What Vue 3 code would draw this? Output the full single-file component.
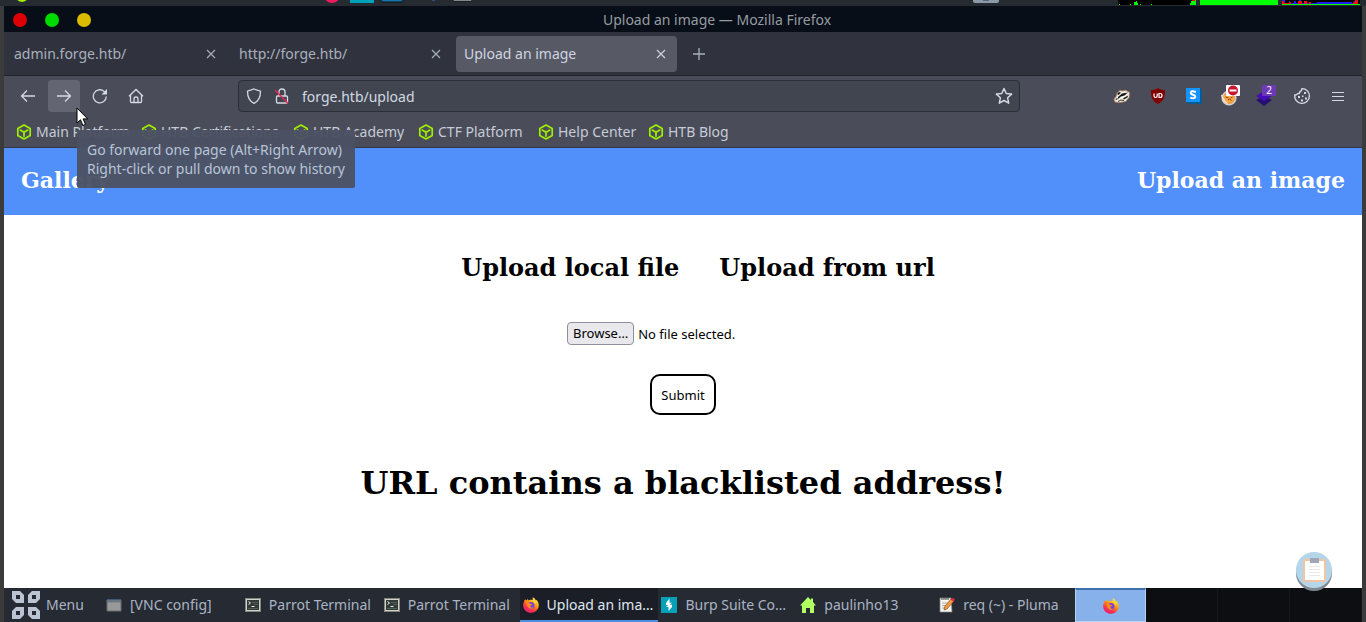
<script setup>
const tabs = [
  { title: 'admin.forge.htb/', active: false },
  { title: 'http://forge.htb/', active: false },
  { title: 'Upload an image', active: true },
]
const bookmarks = ['Main Platform', 'HTB Certifications', 'HTB Academy', 'CTF Platform', 'Help Center', 'HTB Blog']
const tasks = [
  { title: '[VNC config]', icon: 'window' },
  { title: 'Parrot Terminal', icon: 'terminal' },
  { title: 'Parrot Terminal', icon: 'terminal' },
  { title: 'Upload an ima…', icon: 'firefox', active: true },
  { title: 'Burp Suite Co…', icon: 'burp' },
  { title: 'paulinho13', icon: 'home' },
  { title: 'req (~) - Pluma', icon: 'pluma' },
]
</script>

<template>
  <div class="desktop">
    <svg class="defs" width="0" height="0" aria-hidden="true">
      <defs>
        <linearGradient id="flame" x1="0.8" y1="0" x2="0.2" y2="1">
          <stop offset="0" stop-color="#fff44f" />
          <stop offset="0.4" stop-color="#ff980e" />
          <stop offset="0.7" stop-color="#ff3647" />
          <stop offset="1" stop-color="#e31587" />
        </linearGradient>
        <symbol id="fox" viewBox="0 0 16 16">
          <path d="M1 5c.2-1.500.8-2.300 1.400-2.800L3 3.500 5 2l.3 1.500c1.500-.8 3-.8 4.200-.2L9.800.2c2 1 2.700 2.200 3 3.300l.9-.4c2 2.400 2.600 5 1.500 8-1.200 3-4 4.700-7.200 4.700C3.500 15.800.2 12.500.2 8.500.2 7 .5 6 1 5z" fill="url(#flame)" />
          <circle cx="8" cy="8.600" r="3.500" fill="#7542e5" />
          <path d="M3.500 6.500c1.500-.8 3-.5 4.200.4l2 .1c-.5 1-1.700 1.200-2.200 2-.2 1.300 1.200 2.200 3 1.200-1.500 2.800-6.300 2.200-7-3.700z" fill="#ff8a16" />
          <path d="M8.500 3.800c2 .3 3.500 1.800 3.700 3.700l1.300-2.500-2-2.500z" fill="#ffd43a" />
        </symbol>
        <symbol id="cube" viewBox="0 0 16 16">
          <path d="M8 1.100 14.200 4.600v6.900L8 15 1.800 11.500V4.600zM4.200 6.100 8 8.300l3.800-2.200M8 8.300v3.900" fill="none" stroke="#9fef00" stroke-width="1.700" stroke-linejoin="round" stroke-linecap="round" />
        </symbol>
      </defs>
    </svg>

    <div class="strip" aria-hidden="true">
      <svg width="480" height="6">
        <circle cx="22" cy="-4" r="6" fill="#9fef00" />
        <circle cx="332" cy="-5" r="8" fill="#ef1a5e" />
        <rect x="350" width="24" height="3" fill="#00a0b8" />
        <rect x="381" y="-4" width="22" height="6" rx="2" fill="#1476a8" stroke="#0b1118" />
        <rect x="432" width="3" height="1" fill="#35507c" />
        <rect x="453" y="-4" width="19" height="5" rx="1" fill="#fff" stroke="#0b1118" />
      </svg>
      <svg width="406" height="6">
        <rect x="13" y="-4" width="26" height="7" rx="2" fill="#8a9aa8" />
        <rect x="23" width="6" height="1" fill="#5b6670" />
        <rect x="158" width="78" height="5" fill="#000" />
        <path d="M159 5V4h1v1zM170 5V4h1v1zM174 5V2h2V1h1v2h1v2zM180 5V4h1v1zM191 5V4h1v1zM230 5V3h1V1h1V0h4v5z" fill="#0f0" />
        <rect x="232" width="3" height="1" fill="#f20000" />
        <rect x="240" width="78" height="5" fill="#0f0" />
        <rect x="322" width="78" height="5" fill="#000" />
        <path d="M322 0h3v3h4V1h1v2h4V1h2v2h3V0h2v3h3V1h2v2h48V1h2V0h2v4h-76z" fill="#2020f0" />
        <path d="M322 4V1h2v2h5V2h2v2h7V1h4v3h2V1h3v3h2V2h2v2h42V2h2V0h3v4z" fill="#f01010" />
        <path d="M357 2h35v2h-35z" fill="#2020f0" />
        <rect x="322" y="4" width="78" height="1" fill="#0f0" />
      </svg>
    </div>

    <main class="window">
      <header class="titlebar">
        <div class="lights">
          <button class="light red" aria-label="Close"></button>
          <button class="light green" aria-label="Minimize"></button>
          <button class="light yellow" aria-label="Maximize"></button>
        </div>
        <span class="window-title">Upload an image — Mozilla Firefox</span>
      </header>

      <div class="tabs">
        <div v-for="tab in tabs" :key="tab.title" class="tab" :class="{ active: tab.active }">
          <span>{{ tab.title }}</span>
          <button class="plain" aria-label="Close tab">
            <svg width="10" height="10"><path d="M1 1l8 8M9 1 1 9" fill="none" stroke="currentColor" stroke-width="1.100" /></svg>
          </button>
        </div>
        <button class="plain new-tab" aria-label="New tab">
          <svg width="12" height="12"><path d="M6 0v12M0 6h12" stroke="currentColor" stroke-width="1.300" /></svg>
        </button>
      </div>

      <nav class="toolbar">
        <div class="nav-buttons">
          <button class="tool" aria-label="Back">
            <svg width="16" height="16"><path d="M15 8H1.500M7 2.500 1.500 8 7 13.500" /></svg>
          </button>
          <div class="forward">
            <button class="tool hovered" aria-label="Forward">
              <svg width="16" height="16"><path d="M1 8h13.500M9 2.500 14.500 8 9 13.500" /></svg>
            </button>
            <div class="tooltip" role="tooltip">Go forward one page (Alt+Right Arrow)<br />Right-click or pull down to show history</div>
            <svg class="pointer" width="13" height="20" aria-hidden="true"><path d="M1 1v15l3.500-3.200 2.400 5.700 2.600-1.100-2.400-5.500h4.600z" fill="#fff" stroke="#000" /></svg>
          </div>
          <button class="tool" aria-label="Reload">
            <svg width="16" height="16"><path d="M14.300 8.500A6.500 6.500 0 1 1 12 3.300l1.500 1.200" /><path d="M15 1v5.500H9.500z" fill="currentColor" stroke="none" /></svg>
          </button>
          <button class="tool" aria-label="Home">
            <svg width="16" height="16"><path d="M1 8.200 8 1.500l7 6.700M2.500 7v6.500q0 1 1 1h9q1 0 1-1V7M6 14.500v-4q0-1.500 2-1.500t2 1.500v4" /></svg>
          </button>
        </div>

        <div class="urlbar">
          <svg width="16" height="16"><path d="M8 1 14.500 3.200C14.500 9 13 13 8 15.300 3 13 1.500 9 1.500 3.200z" /></svg>
          <svg width="16" height="16"><rect x="2.500" y="8" width="11" height="7" rx="1" /><path d="M5 8V4q0-3 3-3t3 3v4" /><path d="M1 2 14 15.500" stroke="#e22850" stroke-width="1.500" /></svg>
          <input type="text" value="forge.htb/upload" aria-label="Address" />
          <svg width="18" height="18" viewBox="0 0 16 16"><path d="M8 1.300 10 5.800l4.800.5-3.600 3.300 1 4.800L8 12l-4.200 2.400 1-4.800L1.200 6.300 6 5.800z" stroke-linejoin="round" /></svg>
        </div>

        <div class="extensions">
          <button class="plain" aria-label="Privacy Badger">
            <svg width="18" height="16"><path d="M1 11 3.500 8 4 5l3-2.500 2 .5 4-.5 3.500 2-.5 5-3.500 4-6 1L2 14z" fill="#f2efe9" stroke="#b98550" stroke-width=".8" /><path d="M4 6l2-2 2 .5L5.500 7zM5 9l4-3.500 6-1-3.500 3-3.500 1-3 2.500zM10 10.500l5-3-.5 2-3.500 2zM2 11l3-1-1 2z" fill="#15171a" /><path d="M5 13.500l3-1.500 3 .5" fill="none" stroke="#33302d" /></svg>
          </button>
          <button class="plain" aria-label="uBlock">
            <svg width="16" height="16"><path d="M8 0c2 1.500 4 2 7 2 0 7-1 11-7 14C2 13 1 9 1 2c3 0 5-.5 7-2z" fill="#800000" /><path d="M4 5.500v2.300q0 1.700 1.600 1.700t1.600-1.700V5.500M9 5.500v4h1q2 0 2-2t-2-2z" fill="none" stroke="#fff" stroke-width="1.200" /></svg>
          </button>
          <button class="plain" aria-label="Stylus">
            <svg width="16" height="16"><path d="M14 0l2 2v14H3l-3-2z" fill="#075b94" /><path d="M0 0h14v14H0z" fill="#1593ff" /><path d="M9.800 4Q4.800 2.200 4.800 4.800q0 1.500 2.200 2t2.300 2Q9.300 11 4.200 9.600" fill="none" stroke="#fff" stroke-width="2" /></svg>
          </button>
          <button class="plain" aria-label="FoxyProxy">
            <svg width="20" height="22"><circle cx="9" cy="13" r="6.800" fill="#ef9636" stroke="#cfd1d0" stroke-width="1.600" /><path d="M4 9l3 1h5l3-1-1 6-5 3-5-3z" fill="#ffa746" /><path d="M1.500 10l3 6 3 2.500" fill="none" stroke="#f4e4cf" stroke-width="1.500" /><path d="M5.500 12l3 1M12.500 12l-2 1M8 15l1.500-1 2 1.500" fill="none" stroke="#7a4716" /><rect x="6" width="14" height="11" rx="1" fill="#fff" /><circle cx="13" cy="5.500" r="5" fill="#c9152d" /><path d="M9.500 5.500h7" stroke="#fff" stroke-width="2" /></svg>
          </button>
          <button class="plain badge-host" aria-label="Layers">
            <svg width="20" height="22"><path d="M0 15l8-4 8 4-8 6z" fill="#25106f" /><path d="M0 11l8-5 8 5-8 5z" fill="#470db5" /></svg>
            <span class="badge">2</span>
          </button>
          <button class="plain" aria-label="Cookies">
            <svg width="18" height="18"><path d="M9 1.600A7.400 7.400 0 1 1 1.700 8q2 .3 2.800-1.300Q7 6.700 7 4.500 9 4 9 1.600z" fill="none" stroke="currentColor" stroke-width="1.400" /><path d="M5 9h2v2H5zM8 12.500h2v2H8zM12 10.500h2v2h-2zM11 5h2v2h-2zM9 8.500h1.500V10H9z" fill="currentColor" /></svg>
          </button>
          <button class="plain" aria-label="Open menu">
            <svg width="12" height="11"><path d="M0 1.500h12M0 5.500h12M0 9.500h12" stroke="currentColor" /></svg>
          </button>
        </div>
      </nav>

      <div class="bookmarks">
        <a v-for="mark in bookmarks" :key="mark" href="#"><svg width="16" height="16"><use href="#cube" /></svg>{{ mark }}</a>
      </div>

      <section class="page">
        <nav class="site-nav">
          <a href="#">Gallery</a>
          <a href="#">Upload an image</a>
        </nav>
        <div class="content">
          <div class="choices">
            <a href="#">Upload local file</a>
            <a href="#">Upload from url</a>
          </div>
          <form @submit.prevent>
            <div class="file-row">
              <input id="file" class="file-input" type="file" />
              <label class="browse" for="file">Browse…</label>
              <span>No file selected.</span>
            </div>
            <button class="submit" type="submit">Submit</button>
          </form>
          <h1>URL contains a blacklisted address!</h1>
        </div>
        <button class="clipboard" aria-label="Clipboard">
          <svg width="36" height="40"><circle cx="18" cy="21" r="18" fill="#7f8790" /><circle cx="18" cy="18" r="18" fill="#b5d5e8" /><rect x="8" y="8" width="21" height="21" rx="1" fill="#fff" stroke="#efc5a3" stroke-width="2" /><rect x="14" y="6" width="9" height="5" fill="#9da7b8" /><path d="M13 14.500h11M13 17.500h11M13 20.500h11M13 23.500h11" stroke="#e9e9e2" /></svg>
        </button>
      </section>
    </main>

    <footer class="taskbar">
      <button class="menu">
        <svg width="28" height="28"><path fill-rule="evenodd" d="M0 0h8l4 4v8H4L0 8zM4 4v4h4V4zM20 0h8v8l-4 4h-8V4zM20 4v4h4V4zM4 16h8v8l-4 4H0v-8zM4 20v4h4v-4zM16 16h8l4 4v8h-8l-4-4zM20 20v4h4v-4z" fill="#bac4d2" /></svg>
        Menu
      </button>
      <div class="tasks">
        <button v-for="(task, i) in tasks" :key="i" class="task" :class="{ active: task.active }">
          <svg v-if="task.icon === 'window'" width="16" height="16"><path d="M1 3h14v11H1z" fill="#999" stroke="#666b70" /><path d="M1 3h14" stroke="#3d6aa5" /><path d="M1 4.500h14" stroke="#71777e" stroke-width="2" /></svg>
          <svg v-else-if="task.icon === 'terminal'" width="16" height="16"><rect x=".5" y="1.500" width="15" height="13" fill="#1e2723" stroke="#85867f" /><rect x="1.500" y="2.500" width="13" height="11" fill="#303a36" stroke="#d2d2cc" /><path d="M7 5.500h6M9 7.500h4M3 11.500h10" stroke="#53605a" /><path d="M3.500 4.500l2 1.500-2 1.500M6.500 9.500h3" fill="none" stroke="#f1f1f1" /></svg>
          <svg v-else-if="task.icon === 'firefox'" width="16" height="16"><use href="#fox" /></svg>
          <svg v-else-if="task.icon === 'burp'" width="16" height="16"><path d="M0 0h16v16H0z" fill="#05a1b9" /><path d="M8.500 1.500v4.200H11L8.500 8H5V6zM7.500 14V10H5l2.500-2.300H11V10z" fill="#fff" /></svg>
          <svg v-else-if="task.icon === 'home'" width="16" height="16"><path d="M8 0l3 3V1.500h2V5l3 3.500h-2V16h-4v-5H6v5H2V8.500H0z" fill="#b2ff63" /></svg>
          <svg v-else width="16" height="16"><path d="M1 1h11l1 14H1z" fill="#f5f5f0" stroke="#888" stroke-width=".7" /><path d="M3 0v3M5 0v3M7 0v3M9 0v3" stroke="#444" /><path d="M3 6h6M3 8.500h5M3 11h4" stroke="#aaa" /><path d="M5 13 6 9l6-7 3 2-7 8z" fill="#f39a3e" stroke="#75431b" stroke-width=".6" /><path d="M11.500 2.500 13 1l3 1-1.500 3z" fill="#e42d3c" /></svg>
          <span>{{ task.title }}</span>
        </button>
      </div>
      <div class="workspaces">
        <button class="workspace current" aria-label="Workspace 1"><svg width="16" height="16"><use href="#fox" /></svg></button>
        <button class="workspace" aria-label="Workspace 2"></button>
        <button class="workspace" aria-label="Workspace 3"></button>
        <button class="workspace" aria-label="Workspace 4"></button>
      </div>
    </footer>
  </div>
</template>

<style>
body {
  background: #3b3b3b;
}
</style>

<style scoped>
* {
  box-sizing: border-box;
}
.desktop {
  display: flex;
  flex-direction: column;
  min-height: 100vh;
  padding: 0 4px;
  background: #3b3b3b;
  font: 14px/20px "Noto Sans", sans-serif;
}
.defs {
  position: absolute;
}
svg {
  display: block;
  flex: none;
}
button {
  font: inherit;
  margin: 0;
  padding: 0;
  border: 0;
  background: none;
}
a {
  color: inherit;
  text-decoration: none;
}
.strip {
  display: flex;
  justify-content: space-between;
  height: 6px;
  margin: 0 -4px;
  overflow: hidden;
  background: #262a31;
}
.window {
  display: flex;
  flex: 1;
  flex-direction: column;
}
.titlebar {
  display: grid;
  grid-template-columns: 1fr auto 1fr;
  align-items: center;
  height: 26px;
  padding: 1px 9px 0;
  background: #070e17;
  color: #969ca2;
}
.window-title {
  grid-column: 2;
  margin-left: 68px;
}
.lights {
  display: flex;
  gap: 18px;
}
.light {
  width: 14px;
  height: 14px;
  border-radius: 50%;
}
.red { background: #dc0006; }
.green { background: #00dc00; }
.yellow { background: #dcbc00; }
.tabs {
  display: flex;
  align-items: center;
  gap: 4px;
  height: 44px;
  padding-left: 2px;
  border-bottom: 1px solid #20232b;
  background: #30333d;
  color: #a9b0be;
}
.tab {
  display: flex;
  flex: 0 1 221px;
  align-items: center;
  justify-content: space-between;
  height: 36px;
  padding: 0 11px 0 8px;
  border-radius: 4px;
}
.tab.active {
  background: #575965;
  color: #cfd5e0;
}
.plain {
  color: inherit;
}
.new-tab {
  margin-left: 12px;
}
.toolbar {
  display: flex;
  align-items: center;
  height: 41px;
  padding: 0 18px 1px 8px;
  background: #4a4d59;
  color: #d3d9e4;
}
.nav-buttons {
  display: flex;
  gap: 4px;
}
.tool {
  display: grid;
  place-items: center;
  width: 32px;
  height: 32px;
  border-radius: 4px;
  color: inherit;
}
.tool.hovered {
  background: #636672;
}
.tool svg,
.urlbar svg {
  fill: none;
  stroke: currentColor;
  stroke-width: 1.3;
}
.forward {
  position: relative;
}
.tooltip {
  position: absolute;
  z-index: 2;
  top: 50px;
  left: 29px;
  padding: 10px;
  border-radius: 2px;
  background: rgba(75, 81, 99, 0.96);
  color: #b9c4d6;
  line-height: 19px;
  white-space: nowrap;
}
.pointer {
  position: absolute;
  z-index: 3;
  top: 27px;
  left: 28px;
}
.urlbar {
  display: flex;
  flex: 1;
  align-items: center;
  gap: 12px;
  height: 32px;
  margin: 0 84px 0 86px;
  padding: 0 6px 0 7px;
  border: 1px solid #2b2e38;
  border-radius: 4px;
  background: #414550;
}
.urlbar input {
  flex: 1;
  min-width: 0;
  height: 28px;
  padding: 0;
  border: 0;
  outline: 0;
  background: none;
  color: #d3d9e4;
  font: inherit;
}
.extensions {
  display: grid;
  grid-template-columns: repeat(7, 36px);
  align-items: center;
  justify-items: center;
  margin-right: -12px;
}
.badge-host {
  position: relative;
}
.badge {
  position: absolute;
  top: 0;
  right: 0;
  width: 14px;
  height: 11px;
  border-radius: 1px;
  background: #6d39b8;
  color: #fff;
  font-size: 10px;
  line-height: 11px;
}
.bookmarks {
  display: grid;
  grid-template-columns: 125px 152px 125px 120px 110px auto;
  justify-content: start;
  align-items: center;
  height: 31px;
  padding-left: 12px;
  border-bottom: 1px solid #343944;
  background: #4a4d59;
  color: #c5cbd7;
}
.bookmarks a {
  display: flex;
  align-items: center;
  gap: 4px;
  white-space: nowrap;
}
.page {
  position: relative;
  display: flex;
  flex: 1;
  flex-direction: column;
  background: #fff;
  color: #000;
}
.site-nav {
  display: flex;
  align-items: center;
  justify-content: space-between;
  height: 67px;
  padding: 0 17px 4px;
  background: #5190fb;
  color: #fff;
  font: bold 22px/28px "DejaVu Serif", serif;
}
.content {
  display: flex;
  flex-direction: column;
  align-items: center;
  padding-top: 39px;
}
.choices {
  display: flex;
  gap: 40px;
  padding-left: 30px;
  font: bold 24px/28px "DejaVu Serif", serif;
}
form {
  display: flex;
  flex-direction: column;
  align-items: center;
  padding-top: 40px;
  font-size: 13px;
}
.file-row {
  position: relative;
  display: flex;
  align-items: center;
  gap: 4px;
  width: 232px;
}
.file-input {
  position: absolute;
  inset: 0;
  width: 100%;
  opacity: 0;
}
.browse {
  padding: 1px 5px;
  border: 1px solid #8f8f9d;
  border-radius: 4px;
  background: #e9e9ed;
  line-height: 19px;
}
.submit {
  height: 41px;
  margin-top: 29px;
  padding: 0 9px;
  border: 2px solid #000;
  border-radius: 10px;
  background: #fff;
  color: #000;
}
h1 {
  margin: 49px 0 0;
  font: bold 32px/38px "DejaVu Serif", serif;
}
.clipboard {
  position: absolute;
  right: 30px;
  bottom: -4px;
}
.taskbar {
  display: flex;
  height: 34px;
  background: #262a33;
  color: #aab4c3;
}
.menu {
  display: flex;
  align-items: center;
  gap: 6px;
  width: 99px;
  padding-left: 8px;
  color: inherit;
}
.tasks {
  display: flex;
  flex: 1;
}
.task {
  display: flex;
  flex: 1;
  align-items: center;
  gap: 8px;
  min-width: 0;
  padding: 2px 0 0 3px;
  border-bottom: 2px solid transparent;
  color: inherit;
  white-space: nowrap;
}
.task.active {
  border-color: #4a90e2;
  background: #1b1e26;
  color: #dfe6f0;
}
.workspaces {
  display: grid;
  grid-template-columns: 71px repeat(3, 72px);
  background: #0d0e12;
}
.workspace {
  display: grid;
  place-items: center;
  border-right: 1px solid #15171c;
}
.workspace.current {
  border: 1px solid #b6d3f6;
  border-top: 2px solid #3d70ac;
  background: #87b1ea;
}
</style>
